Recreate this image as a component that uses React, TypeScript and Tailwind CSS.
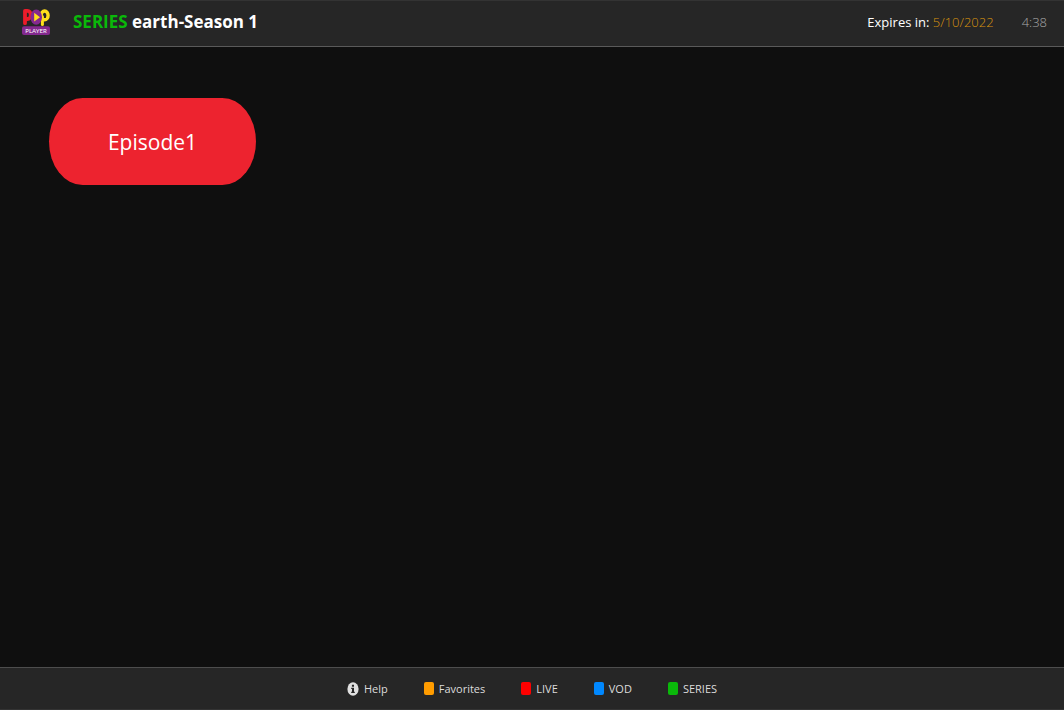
const shortcuts = [
  { label: 'Favorites', swatch: 'bg-[#ff9c00]' },
  { label: 'LIVE', swatch: 'bg-[#ff0000]' },
  { label: 'VOD', swatch: 'bg-[#0088ff]' },
  { label: 'SERIES', swatch: 'bg-[#0ab80a]' },
];

function Logo() {
  return (
    <svg viewBox="0 0 28 28" className="h-7 w-7 shrink-0" role="img" aria-label="Pop Player">
      <path d="M3 15.2V2.8h2.4a3.4 4.1 0 0 1 0 8.2H3.4" fill="none" stroke="#ed1c2b" strokeWidth="3.8" strokeLinecap="round" strokeLinejoin="round" />
      <path d="M20.4 16.4V8.4" fill="none" stroke="#ffdf1b" strokeWidth="3" strokeLinecap="round" />
      <ellipse cx="22.6" cy="7.4" rx="3.5" ry="4.4" fill="none" stroke="#ffdf1b" strokeWidth="3.4" />
      <ellipse cx="14.2" cy="9.2" rx="5.8" ry="7.6" fill="#84298f" />
      <path d="M12.2 4.8 18 9.2l-5.8 4.4Z" fill="#ffdf1b" />
      <rect x="0" y="18.2" width="28" height="8.8" rx="2" fill="#84298f" />
      <text x="14" y="25" textAnchor="middle" fontSize="6" fill="#fff" fontFamily="Lato, 'Liberation Sans', sans-serif">PLAYER</text>
    </svg>
  );
}

function InfoIcon() {
  return (
    <svg viewBox="0 0 12 14" className="h-3.5 w-3 shrink-0" aria-hidden="true">
      <ellipse cx="6" cy="7" rx="5.6" ry="6.8" fill="#e0e0e0" />
      <path d="M4.9 2.8h2.1v2H4.9ZM4.2 5.7H7v4h.8v1.2H4.2V9.7H5V6.9h-.8Z" fill="#262626" />
    </svg>
  );
}

export default function App() {
  return (
    <div className="flex min-h-screen flex-col bg-[#0f0f0f] font-['Open_Sans','Noto_Sans',sans-serif] text-white">
      <header className="flex h-[47px] items-center justify-between border-t border-b border-t-[#333333] border-b-[#5a5a5a] bg-[#262626] pr-[17px] pb-1 pl-[22px]">
        <div className="flex items-center gap-[23px]">
          <Logo />
          <h1 className="text-[17px] leading-6 font-bold whitespace-nowrap">
            <span className="text-[#0ab80a]">SERIES</span> earth-Season 1
          </h1>
        </div>
        <div className="flex items-center gap-7 text-[13px] leading-5 whitespace-nowrap">
          <p>
            Expires in: <time className="font-light text-[#d8930f]">5/10/2022</time>
          </p>
          <time className="font-light text-[#a8a8a8]">4:38</time>
        </div>
      </header>

      <main className="flex-1 px-[49px] pt-[51px]">
        <button type="button" className="h-[87px] w-[207px] rounded-[34px/44px] bg-[#ed232f] text-[21px] leading-8">
          Episode1
        </button>
      </main>

      <footer className="flex h-[43px] items-center justify-center gap-9 border-t border-b border-t-[#4d4d4d] border-b-[#333333] bg-[#262626] text-[11px] leading-4 text-[#dcdcdc]">
        <button type="button" className="flex items-center gap-[5px]">
          <InfoIcon />
          Help
        </button>
        {shortcuts.map(({ label, swatch }) => (
          <button key={label} type="button" className="flex items-center gap-[5px]">
            <span className={`h-[13px] w-[10px] rounded-[2px] ${swatch}`} />
            {label}
          </button>
        ))}
      </footer>
    </div>
  );
}
